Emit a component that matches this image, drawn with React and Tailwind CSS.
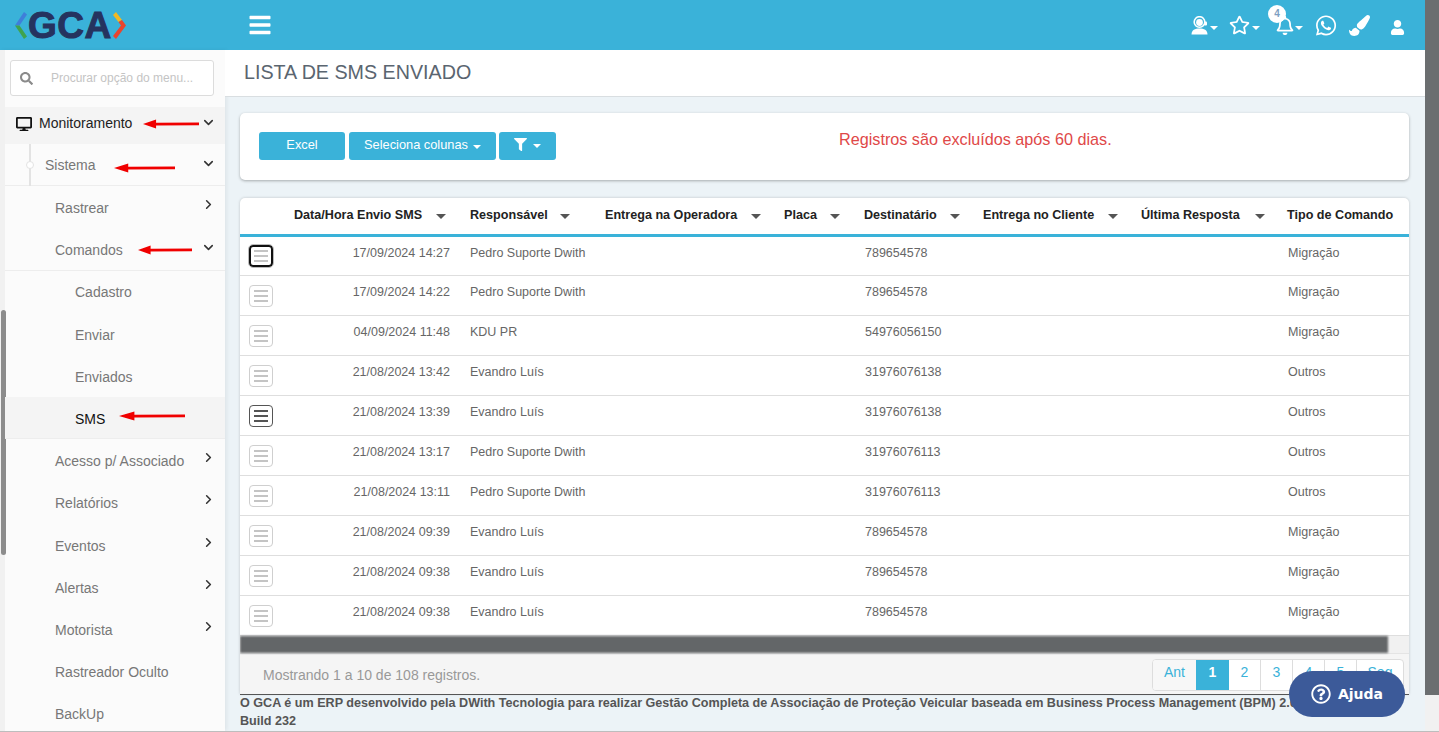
import { FaBars, FaRegStar, FaRegBell, FaWhatsapp, FaPaintBrush, FaUser, FaFilter, FaDesktop, FaSearch, FaRegQuestionCircle } from 'react-icons/fa'
import { LuChevronDown, LuChevronRight } from 'react-icons/lu'

const gridCols = 'grid grid-cols-[54px_176px_135px_179px_80px_119px_158px_146px_1fr]'

const columns = [
  { label: 'Data/Hora Envio SMS', pr: 'pr-[24px]' },
  { label: 'Responsável', pr: 'pr-[35px]' },
  { label: 'Entrega na Operadora', pr: 'pr-[23px]' },
  { label: 'Placa', pr: 'pr-[24px]' },
  { label: 'Destinatário', pr: 'pr-[23px]' },
  { label: 'Entrega no Cliente', pr: 'pr-[23px]' },
  { label: 'Última Resposta', pr: 'pr-[22px]' },
]

const rows = [
  ['17/09/2024 14:27', 'Pedro Suporte Dwith', '789654578', 'Migração', 'focus'],
  ['17/09/2024 14:22', 'Pedro Suporte Dwith', '789654578', 'Migração'],
  ['04/09/2024 11:48', 'KDU PR', '54976056150', 'Migração'],
  ['21/08/2024 13:42', 'Evandro Luís', '31976076138', 'Outros'],
  ['21/08/2024 13:39', 'Evandro Luís', '31976076138', 'Outros', 'hover'],
  ['21/08/2024 13:17', 'Pedro Suporte Dwith', '31976076113', 'Outros'],
  ['21/08/2024 13:11', 'Pedro Suporte Dwith', '31976076113', 'Outros'],
  ['21/08/2024 09:39', 'Evandro Luís', '789654578', 'Migração'],
  ['21/08/2024 09:38', 'Evandro Luís', '789654578', 'Migração'],
  ['21/08/2024 09:38', 'Evandro Luís', '789654578', 'Migração'],
]

function Arrow({ className }) {
  return (
    <svg className={`absolute h-[10px] ${className}`} viewBox="0 0 60 10" preserveAspectRatio="none">
      <path d="M0 5 L14 0.5 L14 3.8 L60 3.6 L60 6.2 L14 6.4 L14 9.5 Z" fill="#f00000" />
    </svg>
  )
}

function Caret({ className = '' }) {
  return <span className={`inline-block h-0 w-0 border-x-[4px] border-t-[4px] border-x-transparent ${className}`} />
}

function HeadsetUser() {
  return (
    <svg width="18" height="19" viewBox="0 0 18 19" fill="white">
      <circle cx="8.5" cy="6" r="5.3" fill="none" stroke="white" strokeWidth="1.6" />
      <circle cx="8.5" cy="6.5" r="3.4" />
      <rect x="13" y="5.5" width="3" height="4" rx="1" />
      <path d="M0.5 18.5 C0.5 14 4 12.5 8.5 12.5 C13 12.5 16.5 14 16.5 18.5 Z" />
    </svg>
  )
}

function Logo() {
  return (
    <div className="ml-[15px] flex items-center">
      <svg width="12" height="27" viewBox="0 0 12 27">
        <polygon points="9,0 12,2.5 4.5,13.5 0,13.5" fill="#3f7fd9" />
        <polygon points="0,13.5 4.5,13.5 12,24.5 9,27" fill="#3fa34d" />
      </svg>
      <span className="ml-[1px] font-['Liberation_Sans',sans-serif] text-[37px] leading-none font-bold tracking-[0.5px] text-[#25335f] [-webkit-text-stroke:1px_#25335f]">GCA</span>
      <svg width="13" height="27" viewBox="0 0 13 27" className="ml-[1px]">
        <polygon points="3,0 0,3 5.5,10 9,8" fill="#f2b822" />
        <polygon points="9,8 5.5,10 8,13.5 0,24 3,27 13,13.5" fill="#e8452f" />
      </svg>
    </div>
  )
}

function Header() {
  return (
    <header className="flex h-[50px] shrink-0 items-center bg-[#3ab2d9] text-white">
      <div className="w-[248px] shrink-0">
        <Logo />
      </div>
      <FaBars className="h-[24px] w-[24px]" />
      <div className="ml-auto flex items-center pr-[20px]">
        <span className="flex items-center gap-[1px]"><HeadsetUser /><Caret className="mt-[6px] border-t-white" /></span>
        <span className="ml-[11px] flex items-center gap-[2px]"><FaRegStar className="h-[20px] w-[21px]" /><Caret className="mt-[6px] border-t-white" /></span>
        <span className="relative ml-[16px] flex items-center gap-[1px]">
          <FaRegBell className="h-[19px] w-[18px]" />
          <Caret className="mt-[6px] border-t-white" />
          <span className="absolute top-[-11px] left-[-8px] flex h-[18px] w-[18px] items-center justify-center rounded-full bg-white text-[10px] font-bold text-[#7d9fc2]">4</span>
        </span>
        <FaWhatsapp className="ml-[12px] h-[23px] w-[22px]" />
        <FaPaintBrush className="ml-[12px] h-[21px] w-[21px]" />
        <FaUser className="ml-[20px] h-[15px] w-[15px] translate-y-[2px]" />
      </div>
    </header>
  )
}

function NavRow({ label, pl, open, closed, active, strong, border, arrow }) {
  return (
    <div className={`relative flex h-[42.2px] shrink-0 items-center pt-[2.6px] pr-[9px] ${pl} ${active ? 'bg-[#f4f4f4]' : ''} ${border ? 'border-b border-[#ededed]' : ''} ${strong ? 'text-[#111]' : 'text-[#777]'}`}>
      <span>{label}</span>
      {open && <LuChevronDown className="mt-[-5px] ml-auto h-[15px] w-[15px] text-[#333]" strokeWidth={2.5} />}
      {closed && <LuChevronRight className="mt-[-8px] ml-auto h-[15px] w-[15px] text-[#333]" strokeWidth={2.5} />}
      {arrow}
    </div>
  )
}

function Sidebar() {
  return (
    <aside className="flex w-[225px] shrink-0 bg-[#fbfbfb] font-['Liberation_Sans',sans-serif] text-[14px] shadow-[2px_0_4px_rgba(0,0,0,0.06)]">
      <div className="w-[5px] shrink-0 bg-[#f1f1f1] pt-[260px]">
        <div className="ml-[1px] h-[245px] w-[5px] rounded-sm bg-[#8c8c8c]" />
      </div>
      <div className="min-w-0 flex-1">
        <div className="flex h-[57px] items-start px-[5px] pt-[10px]">
          <div className="flex h-[36px] w-[204px] items-center rounded-[3px] border border-[#dcdcdc] bg-white pl-[9px]">
            <FaSearch className="h-[13px] w-[13px] text-[#8a8a8a]" />
            <span className="ml-[18px] text-[12px] text-[#c4c4c4]">Procurar opção do menu...</span>
          </div>
        </div>
        <div className="relative flex h-[37px] items-center bg-[#f4f4f4] pr-[9px] pb-[4px] pl-[11px] text-[#222]">
          <FaDesktop className="h-[16px] w-[16px] text-[#111]" />
          <span className="ml-[7px]">Monitoramento</span>
          <LuChevronDown className="mt-[-2px] ml-auto h-[15px] w-[15px] text-[#333]" strokeWidth={2.5} />
          <Arrow className="top-[12px] left-[138px] w-[56px]" />
        </div>
        <div className="relative">
          <NavRow label="Sistema" pl="pl-[40px]" open border arrow={<Arrow className="top-[19px] left-[109px] w-[61px]" />} />
          <div className="absolute top-0 bottom-0 left-[24px] w-[2px] bg-[#e3e3e3]" />
          <div className="absolute top-[17px] left-[21px] h-[8px] w-[8px] rounded-full border border-[#e3e3e3] bg-white" />
        </div>
        <NavRow label="Rastrear" pl="pl-[50px]" closed />
        <NavRow label="Comandos" pl="pl-[50px]" open border arrow={<Arrow className="top-[17px] left-[133px] w-[54px]" />} />
        <NavRow label="Cadastro" pl="pl-[70px]" />
        <NavRow label="Enviar" pl="pl-[70px]" />
        <NavRow label="Enviados" pl="pl-[70px]" />
        <NavRow label="SMS" pl="pl-[70px]" active strong border arrow={<Arrow className="top-[14px] left-[114px] w-[66px]" />} />
        <NavRow label="Acesso p/ Associado" pl="pl-[50px]" closed />
        <NavRow label="Relatórios" pl="pl-[50px]" closed />
        <NavRow label="Eventos" pl="pl-[50px]" closed />
        <NavRow label="Alertas" pl="pl-[50px]" closed />
        <NavRow label="Motorista" pl="pl-[50px]" closed />
        <NavRow label="Rastreador Oculto" pl="pl-[50px]" />
        <NavRow label="BackUp" pl="pl-[50px]" />
      </div>
    </aside>
  )
}

function RowButton({ state }) {
  const line = state === 'hover' ? 'bg-[#555]' : 'bg-[#c4c4c4]'
  const box = state === 'focus'
    ? 'border-2 border-[#111] outline outline-1 outline-[#bbb]'
    : state === 'hover'
      ? 'border border-[#555]'
      : 'border border-[#cfcfcf]'
  return (
    <span className={`ml-[9px] flex h-[22px] w-[24px] flex-col items-center justify-center gap-[3px] rounded-[4px] bg-white ${box}`}>
      <span className={`h-[2px] w-[14px] ${line}`} />
      <span className={`h-[2px] w-[14px] ${line}`} />
      <span className={`h-[2px] w-[14px] ${line}`} />
    </span>
  )
}

function DataTable() {
  return (
    <section className="mt-[18px] ml-[15px] w-[1169px] overflow-hidden rounded-t-[5px] bg-white shadow-[0_0_3px_rgba(0,0,0,0.2)]">
      <div className={`${gridCols} h-[39px] items-center border-b-[3px] border-[#3ab2d9] pb-[1px] text-[12.6px] font-bold text-[#222]`}>
        <span />
        {columns.map((col) => (
          <span key={col.label} className={`flex items-center justify-between whitespace-nowrap ${col.pr}`}>
            {col.label}
            <Caret className="mt-[3px] border-x-[5px] border-t-[5px] border-t-[#555]" />
          </span>
        ))}
        <span className="whitespace-nowrap">Tipo de Comando</span>
      </div>
      {rows.map(([date, person, phone, type, state], i) => (
        <div key={i} className={`${gridCols} items-center border-b border-[#dedede] text-[12.5px] text-[#666] ${i === 0 ? 'h-[39px]' : 'h-[40px]'}`}>
          <RowButton state={state} />
          <span className="pr-[20px] pb-[6px] text-right">{date}</span>
          <span className="pb-[6px]">{person}</span>
          <span />
          <span />
          <span className="pb-[6px] pl-[1px]">{phone}</span>
          <span />
          <span />
          <span className="pb-[6px] pl-[1px]">{type}</span>
        </div>
      ))}
      <div className="h-[17px] bg-[#f1f1f1]">
        <div className="h-[17px] w-[1148px] bg-[#636668] blur-[1px]" />
      </div>
      <div className="flex h-[41px] items-start justify-between border-t border-[#e4e4e4] bg-[#f5f5f5] pt-[5px] pr-[5px] pl-[23px]">
        <span className="mt-[6px] text-[14px] text-[#999]">Mostrando 1 a 10 de 108 registros.</span>
        <div className="flex h-[32px] overflow-hidden rounded-[4px] border border-[#ddd] bg-white pb-0 text-[14px] text-[#3ab2d9]">
          <span className="flex w-[43px] items-center justify-center bg-[#f7f7f7] pb-[5px]">Ant</span>
          <span className="flex w-[33px] items-center justify-center bg-[#3ab2d9] pb-[5px] font-bold text-white">1</span>
          <span className="flex w-[32px] items-center justify-center border-r border-[#ddd] pb-[5px]">2</span>
          <span className="flex w-[32px] items-center justify-center border-r border-[#ddd] pb-[5px]">3</span>
          <span className="flex w-[32px] items-center justify-center border-r border-[#ddd] pb-[5px]">4</span>
          <span className="flex w-[32px] items-center justify-center border-r border-[#ddd] pb-[5px]">5</span>
          <span className="flex w-[46px] items-center justify-center pb-[5px]">Seg</span>
        </div>
      </div>
    </section>
  )
}

export default function App() {
  return (
    <div className="relative flex h-[732px] overflow-hidden border-b border-[#bdbdbd] bg-[#ecf3f7] font-['Liberation_Sans',sans-serif]">
      <div className="flex min-w-0 flex-1 flex-col">
        <Header />
        <div className="flex min-h-0 flex-1">
          <Sidebar />
          <main className="min-w-0 flex-1">
            <div className="flex h-[47px] items-center border-b border-[#d9dee1] bg-white pl-[19px] text-[19.7px] text-[#5a6570]">
              LISTA DE SMS ENVIADO
            </div>
            <section className="mt-[16px] ml-[15px] flex h-[67px] w-[1169px] rounded-[5px] bg-white pt-[19px] pl-[19px] shadow-[0_1px_3px_rgba(0,0,0,0.3)]">
              <button className="h-[28px] w-[86px] rounded-[3px] bg-[#3ab2d9] pb-[2px] text-[12.8px] text-white">Excel</button>
              <button className="ml-[4px] flex h-[28px] w-[147px] items-center justify-center gap-[5px] rounded-[3px] bg-[#3ab2d9] pb-[2px] text-[12.8px] text-white">
                Seleciona colunas <Caret className="mt-[3px] border-t-white" />
              </button>
              <button className="ml-[3px] flex h-[28px] w-[57px] items-center justify-center gap-[6px] rounded-[3px] bg-[#3ab2d9] pb-[3px] text-white">
                <FaFilter className="h-[13px] w-[13px]" /> <Caret className="mt-[3px] border-t-white" />
              </button>
              <p className="ml-[283px] text-[16.2px] leading-[14px] text-[#e04848]">Registros são excluídos após 60 dias.</p>
            </section>
            <DataTable />
            <footer className="ml-[15px] w-[1169px] border-t border-[#555] text-[12.6px] leading-[18px] font-bold text-[#555]">
              <p className="-mt-[1px] whitespace-nowrap">O GCA é um ERP desenvolvido pela DWith Tecnologia para realizar Gestão Completa de Associação de Proteção Veicular baseada em Business Process Management (BPM) 2.0</p>
              <p>Build 232</p>
            </footer>
          </main>
        </div>
      </div>
      <div className="w-[14px] shrink-0 bg-[#f1f1f1]">
        <div className="h-[695px] bg-[#6b6e70]" />
      </div>
      <button className="absolute top-[671px] left-[1289px] flex h-[46px] w-[116px] items-center justify-center gap-[7px] rounded-full bg-[#3c5a99] font-['DejaVu_Sans',sans-serif] text-[14px] font-bold text-white">
        <FaRegQuestionCircle className="h-[20px] w-[20px]" />
        Ajuda
      </button>
    </div>
  )
}
